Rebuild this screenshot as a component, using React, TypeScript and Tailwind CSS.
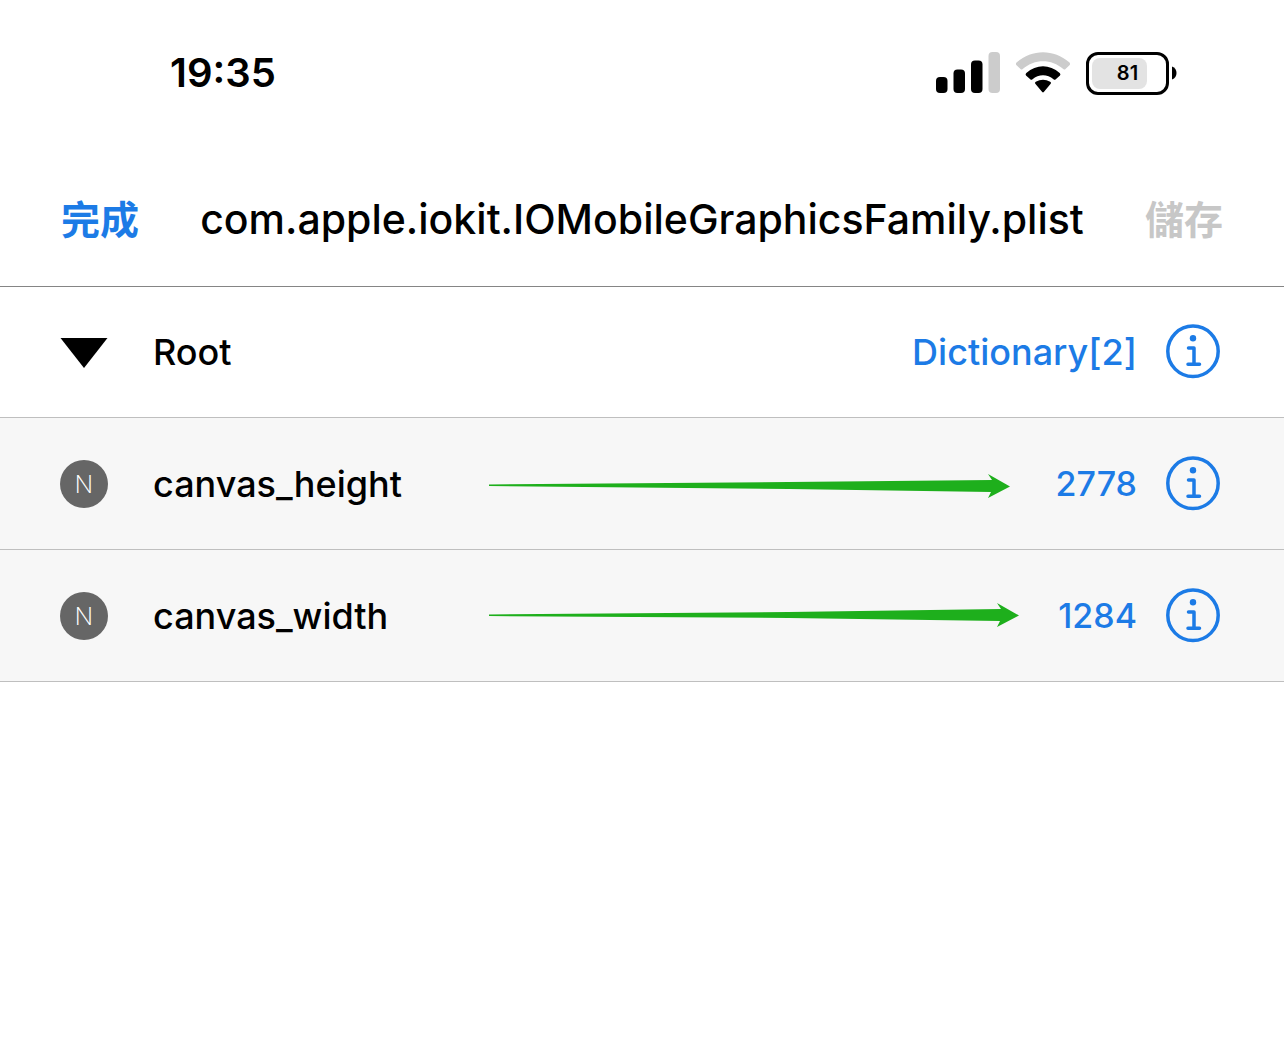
import { ReactNode } from "react";

type EntryProps = {
  name: string;
  value: string;
  arrow: ReactNode;
};

function SignalIcon() {
  return (
    <svg className="h-[42px] w-16" viewBox="0 0 64 42" aria-hidden="true">
      <rect x="0" y="25" width="11.500" height="16" rx="4" />
      <rect x="17.500" y="17.500" width="11.500" height="23.500" rx="4" />
      <rect x="35" y="8.500" width="11.500" height="32.500" rx="4" />
      <rect x="52.500" y="0" width="11.500" height="41" rx="4" fill="#cccccc" />
    </svg>
  );
}

function WifiIcon() {
  return (
    <svg className="h-[42px] w-14" viewBox="0 0 56 42" aria-hidden="true">
      <path d="M1.800 13.500Q0 12 1.800 10.300C17-3.200 39-3.200 54.200 10.300Q56 12 54.200 13.500L50.500 17Q49.500 18 48.300 17C36.500 6.500 19.500 6.500 7.700 17Q6.500 18 5.500 17Z" fill="#cccccc" />
      <path d="M11 23.500Q10 22 11.300 21C21.500 12 34.500 12 44.700 21Q46 22 45 23.500L40.500 27.500Q39.500 28.200 38.500 27.300C32.500 22 23.500 22 17.500 27.300Q16.500 28.200 15.500 27.500Z" />
      <path d="M20.300 31.800Q19.300 30.500 20.800 29.700C25.500 27 30.500 27 35.200 29.700Q36.700 30.500 35.700 31.800L28.800 40Q28 40.800 27.200 40Z" />
    </svg>
  );
}

function Battery() {
  return (
    <div className="flex items-center gap-[3px]">
      <div className="h-[43px] w-[83px] rounded-xl border-3 border-black p-[3px]">
        <div className="relative h-full w-full">
          <div className="h-full w-[78%] rounded-lg bg-[#e3e3e3]" />
          <span className="absolute inset-0 flex items-center justify-center text-xl font-semibold">
            81
          </span>
        </div>
      </div>
      <svg className="h-[14px] w-[5px]" viewBox="0 0 5 14" aria-hidden="true">
        <path d="M0 0.500C6 2.500 6 11.500 0 13.500Z" />
      </svg>
    </div>
  );
}

function InfoButton({ label }: { label: string }) {
  return (
    <button type="button" aria-label={label} className="ml-7 shrink-0 text-[#1c7be6]">
      <svg className="h-[56px] w-[56px]" viewBox="0 0 56 56" fill="none" stroke="currentColor" aria-hidden="true">
        <circle cx="28" cy="27.300" r="25.200" strokeWidth="3.500" />
        <circle cx="28" cy="14.300" r="3.200" fill="currentColor" stroke="none" />
        <path d="M23.500 24H29V40.300M23 40.300H34.500" strokeWidth="3.500" strokeLinecap="round" strokeLinejoin="round" />
      </svg>
    </button>
  );
}

function HeightArrow() {
  return (
    <svg className="h-8 w-[521px]" viewBox="0 0 521 32" fill="#1eaf1c" aria-hidden="true">
      <path d="M0 16.500L300 14L503 12L499 6L521 18.500L499 30L502 24L300 21L0 18Z" />
    </svg>
  );
}

function WidthArrow() {
  return (
    <svg className="h-8 w-[530px]" viewBox="0 0 530 32" fill="#1eaf1c" aria-hidden="true">
      <path d="M0 14.500L300 12L512 9L508 3L530 15.500L508 27L511 21L300 18L0 16Z" />
    </svg>
  );
}

function NumberEntry({ name, value, arrow }: EntryProps) {
  return (
    <li className="flex h-[132px] items-center border-b border-[#bfbfbf] bg-[#f7f7f7] pr-[63px] pl-[60px]">
      <span className="flex size-12 shrink-0 items-center justify-center rounded-full bg-[#666666] font-['Open_Sans'] text-[26px] font-light text-white">
        N
      </span>
      <span className="ml-[45px] w-[336px] shrink-0">{name}</span>
      <span className="min-w-0 flex-1">{arrow}</span>
      <span className="text-[34px] text-[#1c7be6]">{value}</span>
      <InfoButton label={`About ${name}`} />
    </li>
  );
}

export default function App() {
  return (
    <div className="min-h-screen bg-white font-['Inter','Noto_Sans_CJK_TC',sans-serif] text-black">
      <div className="flex h-[154px] items-center justify-between pr-[107px] pb-2 pl-[170px]">
        <time className="text-[40px] font-semibold">19:35</time>
        <div className="flex items-center gap-[15px]">
          <SignalIcon />
          <WifiIcon />
          <Battery />
        </div>
      </div>

      <header className="flex h-[133px] items-center justify-between border-b border-[#858585] px-[61px]">
        <button type="button" className="text-[39px] font-bold text-[#1c7be6]">
          完成
        </button>
        <h1 className="text-[41px] font-medium">com.apple.iokit.IOMobileGraphicsFamily.plist</h1>
        <button type="button" disabled className="text-[39px] font-bold text-[#c7c7c7]">
          儲存
        </button>
      </header>

      <ul className="text-[36px] font-medium">
        <li className="flex h-[131px] items-center border-b border-[#bfbfbf] pr-[63px] pl-[60px]">
          <button type="button" aria-label="Collapse Root" className="shrink-0">
            <svg className="h-8 w-12" viewBox="0 0 48 32" aria-hidden="true">
              <path d="M0.500 2H47.500L24 32Z" />
            </svg>
          </button>
          <span className="ml-[45px] flex-1">Root</span>
          <span className="text-[#1c7be6]">Dictionary[2]</span>
          <InfoButton label="About Root" />
        </li>
        <NumberEntry name="canvas_height" value="2778" arrow={<HeightArrow />} />
        <NumberEntry name="canvas_width" value="1284" arrow={<WidthArrow />} />
      </ul>
    </div>
  );
}
